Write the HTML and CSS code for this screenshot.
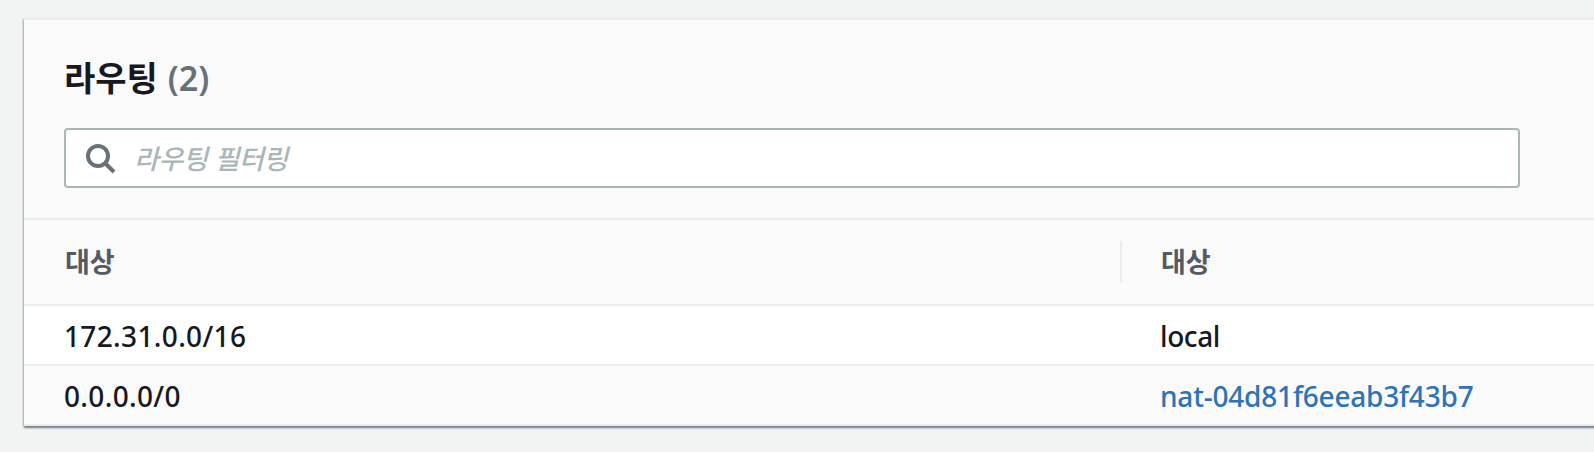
FILE: index.html
```html
<!DOCTYPE html>
<html lang="ko">
<head>
<meta charset="utf-8">
<title>라우팅</title>
<link rel="stylesheet" href="styles.css">
</head>
<body>
<main class="panel">
  <header class="panel-header">
    <h2 class="title"><span class="title-text">라우팅</span><span class="counter">(2)</span></h2>
    <div class="filter">
      <svg class="search-icon" width="30" height="30" viewBox="0 0 30 30" fill="none" stroke="#687078" stroke-width="4"><circle cx="12" cy="12" r="10"/><path d="M19 19l9 9"/></svg>
      <span class="placeholder">라우팅 필터링</span>
    </div>
  </header>
  <div class="table">
    <div class="row head">
      <div class="cell"><span class="label">대상</span></div>
      <div class="cell"><span class="label">대상</span></div>
    </div>
    <div class="row">
      <div class="cell"><span class="cidr">172.31.0.0/16</span></div>
      <div class="cell"><span class="local">local</span></div>
    </div>
    <div class="row shaded">
      <div class="cell"><span class="cidr">0.0.0.0/0</span></div>
      <div class="cell"><a class="link">nat-04d81f6eeab3f43b7</a></div>
    </div>
  </div>
</main>
</body>
</html>
```
FILE: styles.css
```css
* { box-sizing: border-box; }
body {
  margin: 0;
  height: 452px;
  padding: 18px 0 0 24px;
  overflow: hidden;
  background: #f2f4f4;
  color: #16191f;
  font: 500 28px/1 "Noto Sans", "Noto Sans CJK KR", sans-serif;
}
.panel {
  width: 1600px;
  height: 408px;
  background: #fafafa;
  border-top: 2px solid #eaeded;
  box-shadow: 0 2px 2px 0 rgba(0, 28, 36, .5), 0 0 3px 0 rgba(0, 28, 36, .3);
  clip-path: inset(0 -10px -10px -10px);
}
.panel-header {
  height: 200px;
  padding: 36px 0 0 40px;
  border-bottom: 2px solid #eaeded;
}
.title {
  display: flex;
  align-items: center;
  gap: 10px;
  height: 42px;
  margin: 0 0 30px;
  font-size: 34px;
  line-height: 42px;
}
.title-text { font-family: "Noto Sans CJK KR", sans-serif; font-weight: 700; }
.counter { padding-top: 1px; color: #687078; font-weight: 600; font-size: 34px; }
.filter {
  display: flex;
  align-items: center;
  width: 1456px;
  height: 60px;
  padding-left: 20px;
  background: #fff;
  border: 2px solid #aab7b8;
  border-radius: 4px;
}
.search-icon { margin: 1px 18px 0 0; }
.placeholder {
  color: #aab7b8;
  font: italic 500 27px/56px "Noto Sans CJK KR", sans-serif;
  letter-spacing: -.4px;
}
.row {
  display: grid;
  grid-template-columns: 1098px 1fr;
  height: 60px;
  background: #fff;
  border-bottom: 2px solid #eaeded;
}
.head { height: 86px; background: #fafafa; }
.shaded { background: #fafafa; }
.cell { display: flex; align-items: center; padding: 2px 0 0 40px; }
.row .cell + .cell { padding-left: 38px; }
.head .cell { padding: 0 0 3px 41px; }
.head .cell + .cell {
  height: 42px;
  align-self: center;
  margin-left: -2px;
  padding-left: 39px;
  border-left: 2px solid #eaeded;
}
.label {
  color: #545b64;
  font: 700 27px/36px "Noto Sans CJK KR", sans-serif;
}
.cidr { letter-spacing: .35px; }
.local { letter-spacing: -.4px; }
.link { color: #2e73b8; letter-spacing: -.2px; }
```
